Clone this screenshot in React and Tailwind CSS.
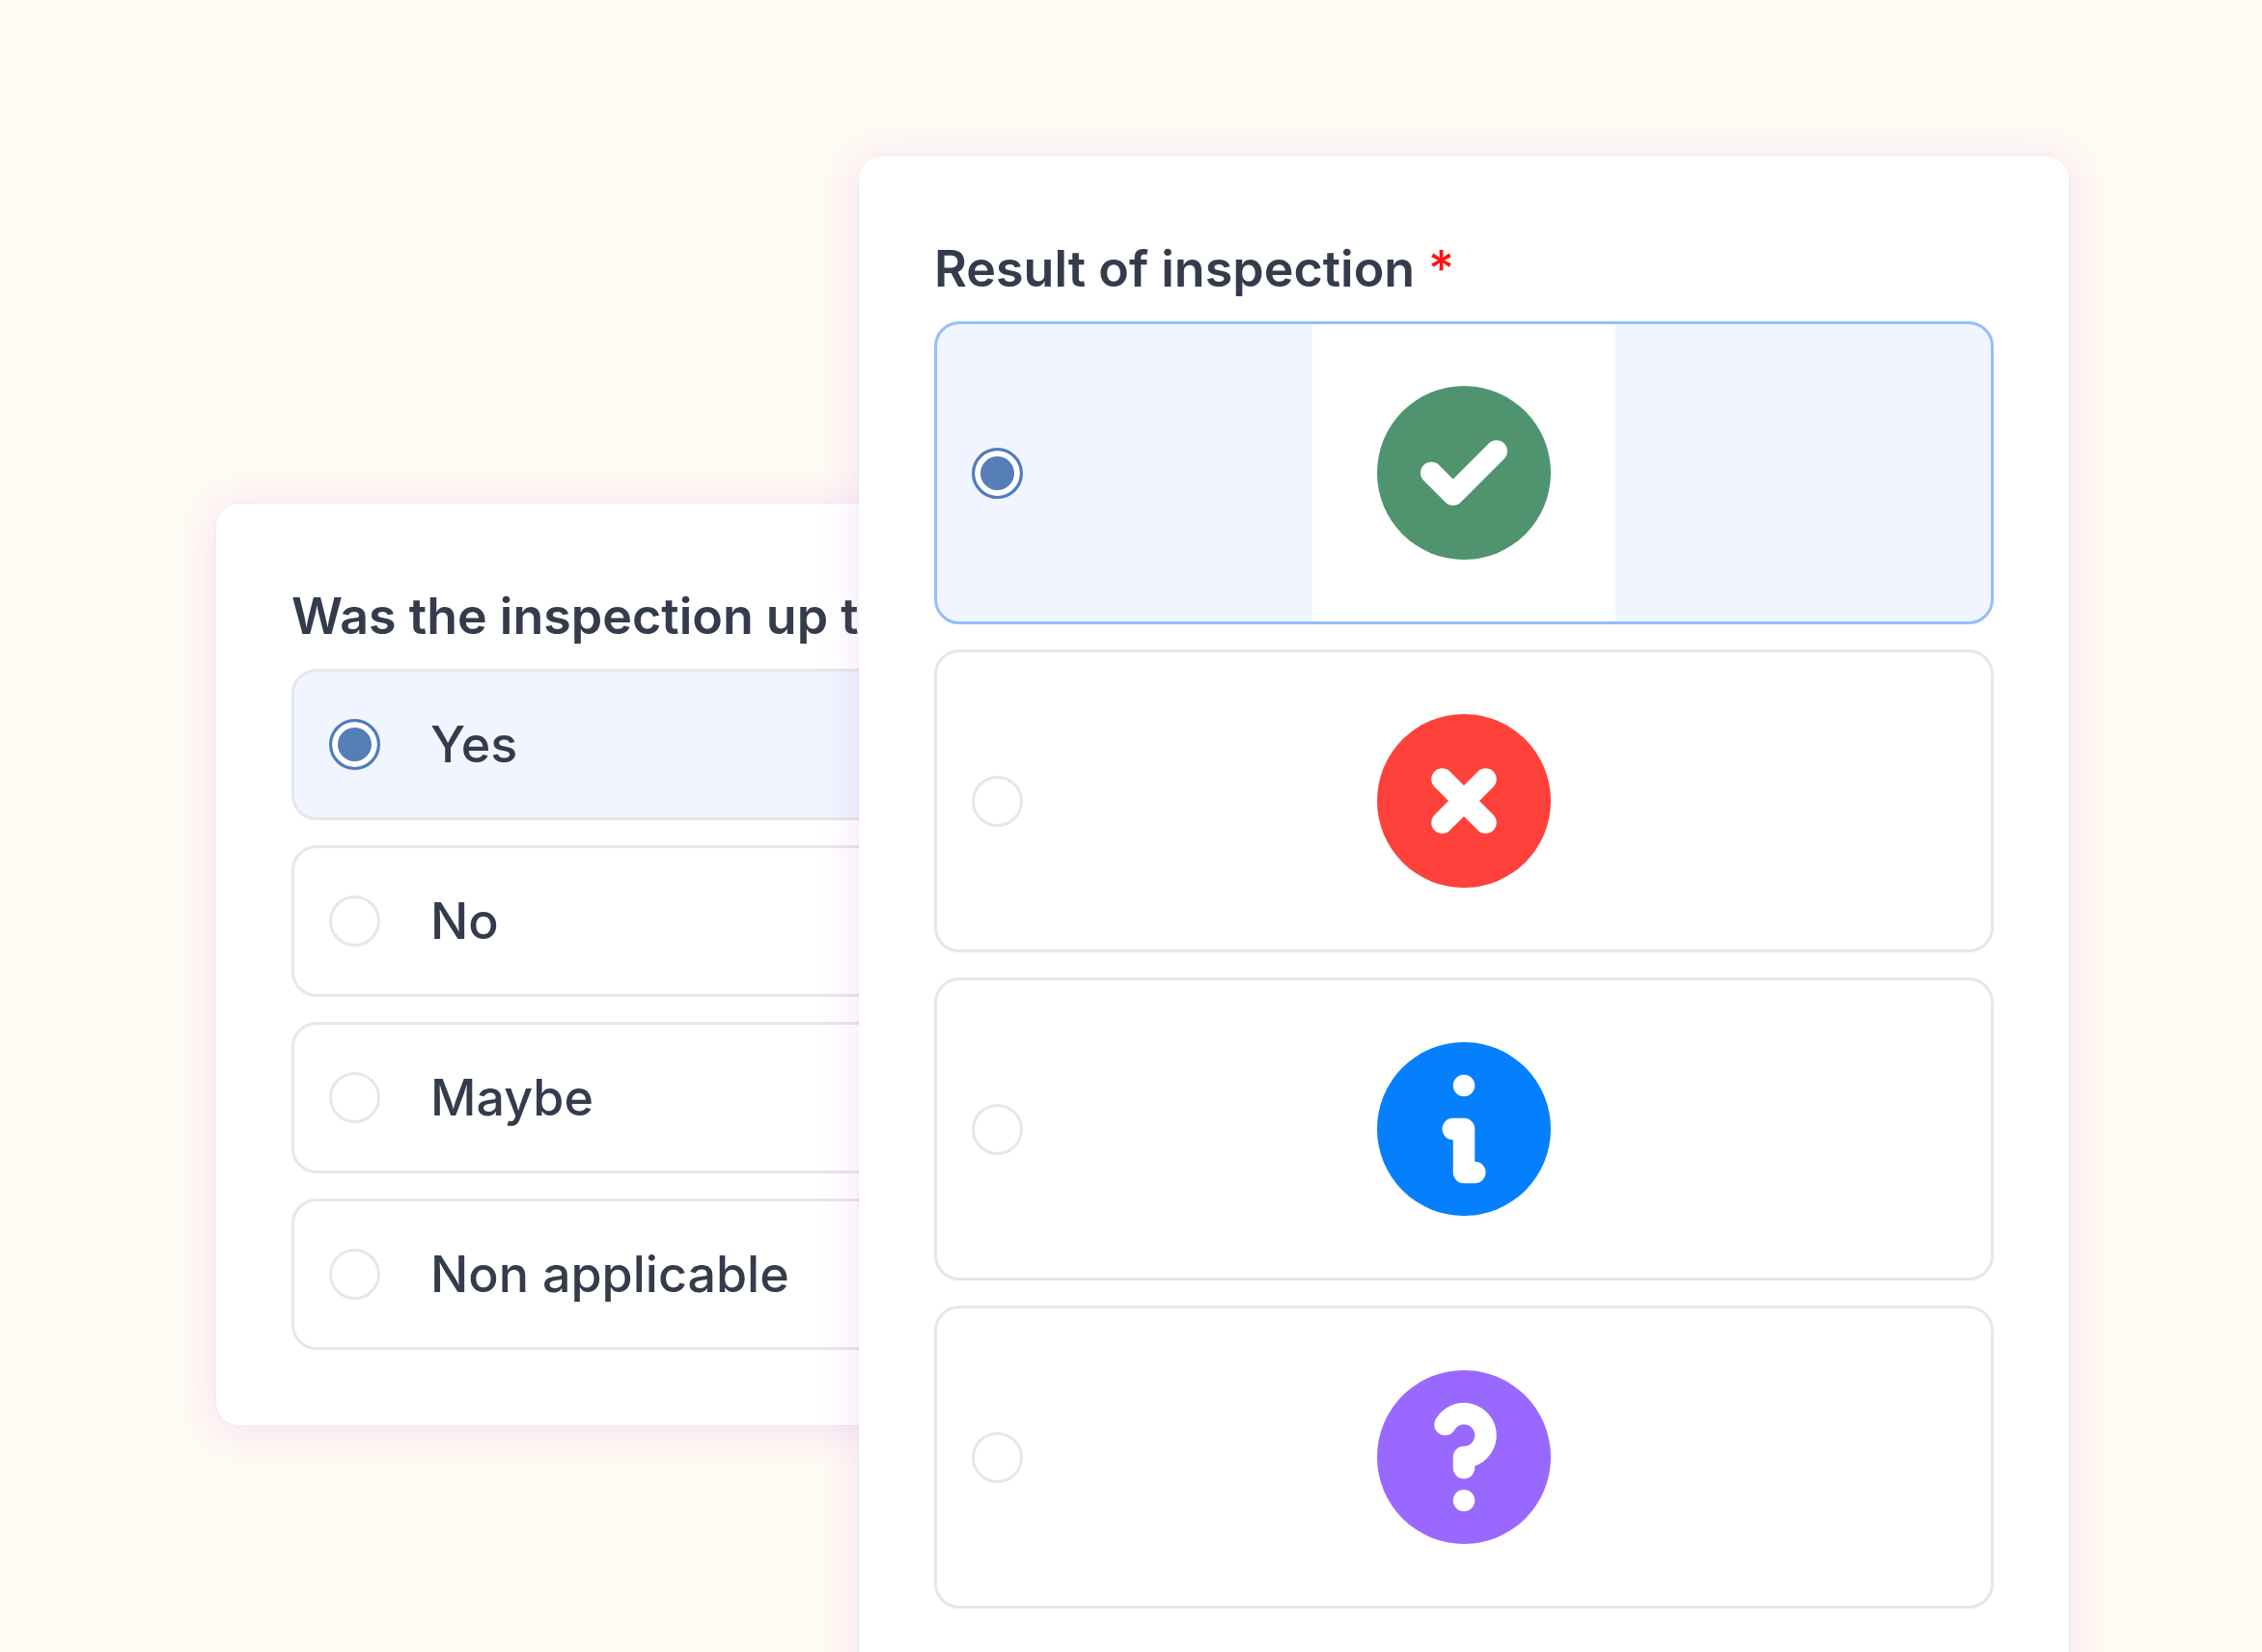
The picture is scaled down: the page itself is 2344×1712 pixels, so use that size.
import React, { useState } from "react";
import clsx from "clsx";

const ANSWERS = ["Yes", "No", "Maybe", "Non applicable"];

const RESULTS = [
  { value: "passed", label: "Passed", color: "#4f946e" },
  { value: "failed", label: "Failed", color: "#ff413b" },
  { value: "info", label: "Information", color: "#0480ff" },
  { value: "unknown", label: "Unknown", color: "#9968ff" },
];

function ResultIcon({ type, color }) {
  // Map result types to the white mark inside the disc
  const getMark = () => {
    switch (type) {
      case "passed":
        return <path d="M56.25 90L78.75 112.5L123.75 67.5" />;
      case "failed":
        return <path d="M67.5 67.5L112.5 112.5M112.5 67.5L67.5 112.5" />;
      case "info":
        return <path d="M90 45H90.01M78.75 90H90V135H101.25" />;
      default:
        return <path d="M70.5 56.25A22.5 22.5 0 1 1 90 90V101.25M90 135H90.01" />;
    }
  };

  return (
    <svg viewBox="0 0 180 180" className="size-[180px]" aria-hidden="true">
      <circle cx="90" cy="90" r="90" fill={color} />
      <g fill="none" stroke="#fff" strokeWidth="22.5" strokeLinecap="round" strokeLinejoin="round">
        {getMark()}
      </g>
    </svg>
  );
}

function Radio(props) {
  return (
    <input
      type="radio"
      className="size-[53px] shrink-0 cursor-pointer appearance-none rounded-full border-3 border-[#e7e6ea] bg-white checked:border-[#517bbd] checked:bg-[#557db6] checked:shadow-[inset_0_0_0_6px_#fff]"
      {...props}
    />
  );
}

function Card({ title, required, className, children }) {
  return (
    <section
      className={clsx(
        "rounded-3xl bg-white p-[78px] shadow-[0_4px_40px_2px_rgba(175,65,240,0.13),0_0_2px_rgba(130,130,230,0.12)]",
        className
      )}
    >
      <fieldset className="min-w-0">
        <legend className="mb-[15px] text-[52px] leading-[78px] font-semibold whitespace-nowrap">
          {title}
          {required && <span className="font-medium text-[#ff1414]"> *</span>}
        </legend>
        <div className="flex flex-col gap-[26px]">{children}</div>
      </fieldset>
    </section>
  );
}

export default function App() {
  const [answer, setAnswer] = useState("Yes");
  const [result, setResult] = useState("passed");

  return (
    <main className="grid h-screen grid-cols-[666fr_1254fr] items-start overflow-hidden bg-[#fffaf3] pl-[224px] pr-[200px] font-[Inter,sans-serif] text-[#343c4c]">
      <Card title="Was the inspection up to standard?" className="mt-[522px] -mr-[400px]">
        {ANSWERS.map((item) => (
          <label
            key={item}
            className={clsx(
              "flex cursor-pointer items-center gap-[52px] rounded-[26px] border-3 border-[#e7e6ea] px-9 py-[36px] text-[52px] leading-[79px] font-medium",
              answer === item ? "bg-[#f1f5ff]" : "bg-white"
            )}
          >
            <Radio name="answer" value={item} checked={answer === item} onChange={() => setAnswer(item)} />
            {item}
          </label>
        ))}
      </Card>

      <Card title="Result of inspection" required className="relative mt-[162px]">
        {RESULTS.map((item) => (
          <label
            key={item.value}
            className={clsx(
              "grid cursor-pointer grid-cols-[1fr_auto_1fr] items-center rounded-[26px] border-3 px-9",
              result === item.value ? "border-[#93bffd] bg-[#f1f5ff]" : "border-[#e7e6ea] bg-white"
            )}
          >
            <Radio
              name="result"
              value={item.value}
              aria-label={item.label}
              checked={result === item.value}
              onChange={() => setResult(item.value)}
            />
            <span className="bg-white px-[67px] py-16">
              <ResultIcon type={item.value} color={item.color} />
            </span>
          </label>
        ))}
      </Card>
    </main>
  );
}
